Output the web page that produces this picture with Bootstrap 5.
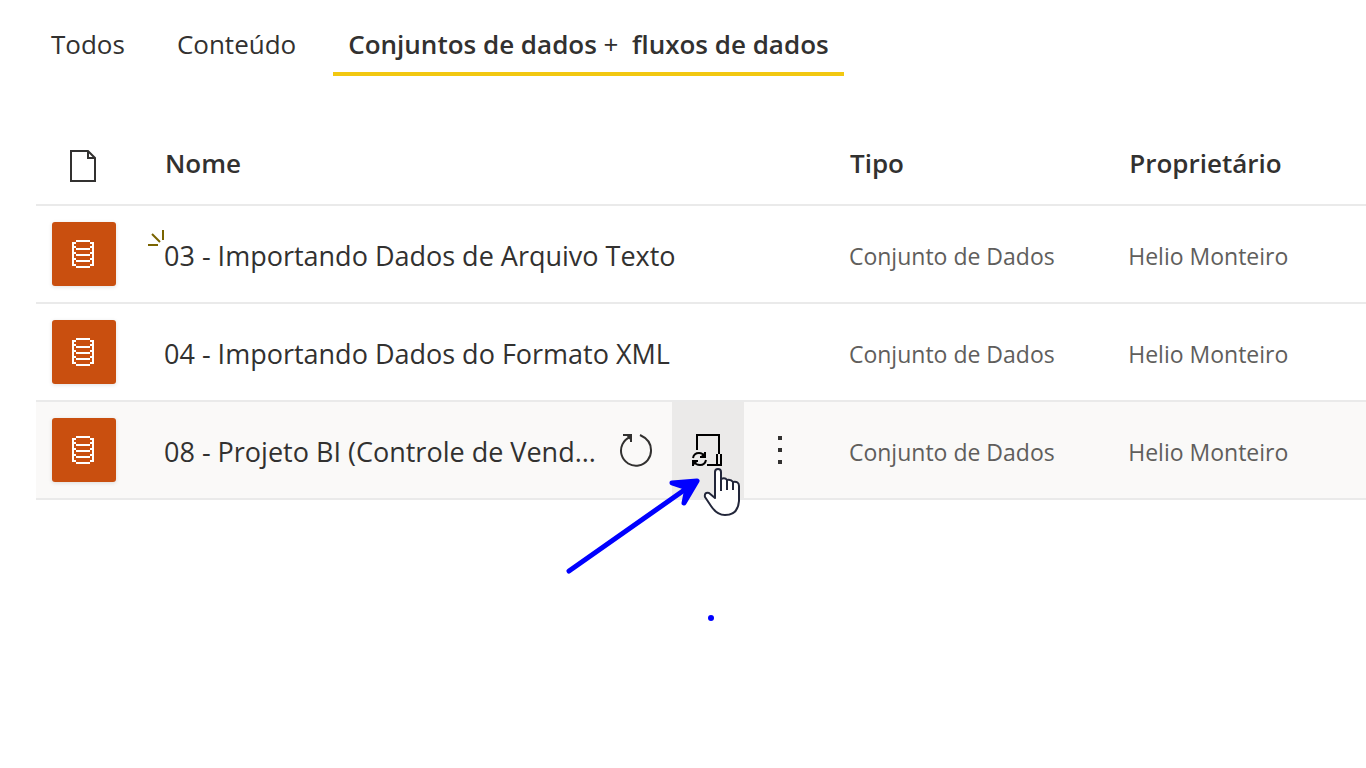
<!DOCTYPE html>
<html lang="pt-BR">
<head>
<meta charset="utf-8">
<meta name="viewport" content="width=device-width, initial-scale=1">
<title>Conjuntos de dados + fluxos de dados</title>
<link href="https://cdn.jsdelivr.net/npm/bootstrap@5.3.0/dist/css/bootstrap.min.css" rel="stylesheet">
<style>
  body { font-family: "Open Sans", "Noto Sans", sans-serif; font-size: 26px; line-height: 36px; color: #323130; background: #fff; }
  svg { display: block; }
  .tabs { gap: 22px; padding: 20px 0 0 36px; }
  .tabs .nav-link { color: #323130; padding: 6px 15px 10px; border-bottom: 4px solid transparent; font-size: 26px; line-height: 36px; white-space: nowrap; }
  .tabs .nav-link.active { font-weight: 600; border-bottom-color: #f2c811; }
  .items-wrap { padding-left: 36px; margin-top: 46px; }
  .items { width: 100%; table-layout: fixed; border-collapse: separate; border-spacing: 0; }
  .items th, .items td { border-bottom: 2px solid #eaeaea; padding: 0 16px; vertical-align: middle; white-space: nowrap; }
  .items th { height: 84px; font-size: 26px; font-weight: 600; padding-left: 17px; }
  .items td { height: 98px; font-size: 23px; color: #605e5c; }
  .items td.name-cell { font-size: 27px; padding-right: 17px; }
  .col-icon { width: 112px; }
  .col-name { width: 51.5%; }
  .col-type { width: 21%; }
  .name-cell a { display: block; padding-top: 4px; color: #323130; text-decoration: none; }
  .hovered td { background: #faf9f8; }
  .tile { width: 64px; height: 64px; padding-left: 20px; background: #c94f0f; border-radius: 3px; box-shadow: 0 1px 4px rgba(0,0,0,.12); }
  .act { width: 72px; height: 96px; border: 0; background: transparent; padding: 0; color: #323130; }
  .act.on { background: #ebeae9; color: #000; }
  .spark { left: -16px; top: -4px; }
  .pointer { left: -112px; top: 0; pointer-events: none; z-index: 2; }
</style>
</head>
<body class="min-vh-100">
<svg width="0" height="0" class="position-absolute" aria-hidden="true">
  <symbol id="db" viewBox="0 0 22 28"><path d="M4 1H18M4 27H18M4 9H18M4 15H18M4 21H18M1 2V26M21 2V26M2 3H4M18 3H20M2 7H4M18 7H20M2 13H4M18 13H20M2 19H4M18 19H20M2 25H4M18 25H20" fill="none" stroke="#fff" stroke-width="2" shape-rendering="crispEdges"/></symbol>
</svg>

<nav>
  <ul class="nav tabs flex-nowrap">
    <li class="nav-item"><a class="nav-link" href="#">Todos</a></li>
    <li class="nav-item"><a class="nav-link" href="#">Conteúdo</a></li>
    <li class="nav-item"><a class="nav-link active" aria-current="page" href="#">Conjuntos de dados <span class="fw-normal">+</span>&nbsp; fluxos de dados</a></li>
  </ul>
</nav>

<main class="items-wrap">
  <table class="items">
    <colgroup><col class="col-icon"><col class="col-name"><col class="col-type"><col></colgroup>
    <thead>
      <tr>
        <th scope="col" aria-label="Ícone"><svg class="ms-3 mt-1" width="30" height="34" viewBox="0 0 30 34" fill="none" stroke="#323130" stroke-width="2"><path d="M2 3H19L26 10V33H2Z"/><path d="M19 3V10H26"/></svg></th>
        <th scope="col">Nome</th>
        <th scope="col">Tipo</th>
        <th scope="col">Proprietário</th>
      </tr>
    </thead>
    <tbody>
      <tr>
        <td><div class="tile d-flex align-items-center"><svg width="22" height="28"><use href="#db"/></svg></div></td>
        <td class="name-cell"><div class="position-relative"><svg class="spark position-absolute" width="16" height="16" viewBox="0 0 16 16" fill="none" stroke="#7a6400" stroke-width="2"><path d="M0 15H10M4 4L12 12M15 0V10"/></svg><a href="#">03 - Importando Dados de Arquivo Texto</a></div></td>
        <td class="pt-1">Conjunto de Dados</td>
        <td class="pt-1">Helio Monteiro</td>
      </tr>
      <tr>
        <td><div class="tile d-flex align-items-center"><svg width="22" height="28"><use href="#db"/></svg></div></td>
        <td class="name-cell"><a href="#">04 - Importando Dados do Formato XML</a></td>
        <td class="pt-1">Conjunto de Dados</td>
        <td class="pt-1">Helio Monteiro</td>
      </tr>
      <tr class="hovered">
        <td><div class="tile d-flex align-items-center"><svg width="22" height="28"><use href="#db"/></svg></div></td>
        <td class="name-cell">
          <div class="d-flex align-items-center">
            <a class="flex-grow-1" href="#">08 - Projeto BI (Controle de Vend...</a>
            <button class="act" type="button" aria-label="Atualizar agora"><svg class="mx-auto" width="34" height="34" viewBox="0 0 34 34" fill="none" stroke="currentColor" stroke-width="2"><path d="M21 2Q32 7 32 17A15 15 0 1 1 11 4"/><path d="M4 2H12V9"/><path d="M7 2H12V8Z" fill="currentColor" stroke="none"/></svg></button>
            <div class="position-relative">
              <button class="act on d-block" type="button" aria-label="Agendar atualização"><svg class="mx-auto" width="32" height="34" viewBox="0 0 32 34" fill="none" stroke="currentColor" stroke-width="2"><path d="M5 17V2H27V21M15 32H29V21M25 21V32"/><path d="M1 25Q2 20 7 20Q11 20 13 24M13 19V24H8M14 27Q13 32 8 32Q4 32 2 29M1 33V28H6"/><path d="M13 19V24H8ZM1 33V28H6Z" fill="currentColor" stroke="none"/></svg></button>
              <svg class="pointer position-absolute" width="190" height="230" viewBox="560 402 190 230" aria-hidden="true">
                <path d="M569 571L690 486" stroke="#00f" stroke-width="5" stroke-linecap="round"/>
                <path d="M697 481L672 483L687 488L684 503Z" fill="#00f" stroke="#00f" stroke-width="5" stroke-linejoin="round"/>
                <circle cx="711" cy="618" r="3" fill="#00f"/>
                <path d="M715 498V472Q715 469 718 469T721 472V479Q725 477 727 480Q731 479 733 482Q739 481 739 486V501Q738 515 725 515Q717 515 711 506L705 497Q704 492 709 493L715 498Z" fill="#fff" stroke="#22263a" stroke-width="2" stroke-linejoin="round"/>
                <path d="M721 478V491M727 480V490M733 482V490" stroke="#22263a" stroke-width="2"/>
              </svg>
            </div>
            <button class="act" type="button" aria-label="Mais opções"><svg class="mx-auto" width="4" height="28" viewBox="0 0 4 28" fill="currentColor"><path d="M0 0H4V4H0ZM0 12H4V16H0ZM0 24H4V28H0Z"/></svg></button>
          </div>
        </td>
        <td class="pt-1">Conjunto de Dados</td>
        <td class="pt-1">Helio Monteiro</td>
      </tr>
    </tbody>
  </table>
</main>
<script src="https://cdn.jsdelivr.net/npm/bootstrap@5.3.0/dist/js/bootstrap.bundle.min.js"></script>
</body>
</html>
